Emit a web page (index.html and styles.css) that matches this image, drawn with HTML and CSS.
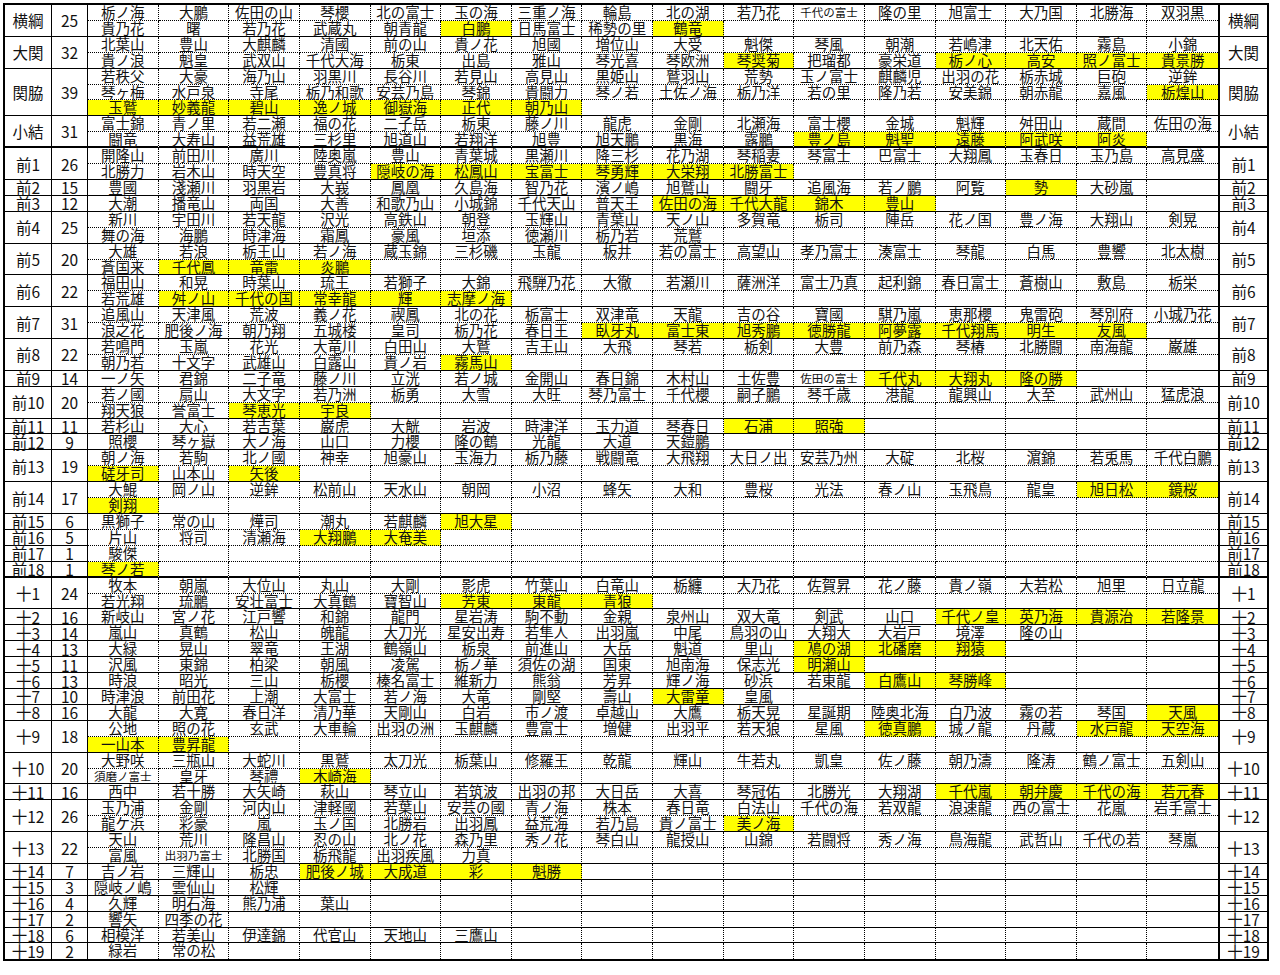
FILE: index.html
```html
<!DOCTYPE html>
<html lang="ja">
<head>
<meta charset="utf-8">
<title>番付表</title>
<link rel="stylesheet" href="styles.css">
</head>
<body>
<div class="page">
<div class="sheet">

<div class="grp"><div class="rk">横綱</div><div class="ct">25</div><div class="names">
<span>栃ノ海</span><span>大鵬</span><span>佐田の山</span><span>琴櫻</span><span>北の富士</span><span>玉の海</span><span>三重ノ海</span><span>輪島</span><span>北の湖</span><span>若乃花</span><span class="s">千代の富士</span><span>隆の里</span><span>旭富士</span><span>大乃国</span><span>北勝海</span><span>双羽黒</span>
<span>貴乃花</span><span>曙</span><span>若乃花</span><span>武蔵丸</span><span>朝青龍</span><span class="y">白鵬</span><span>日馬富士</span><span>稀勢の里</span><span class="y">鶴竜</span><span></span><span></span><span></span><span></span><span></span><span></span><span></span>
</div><div class="rk rr">横綱</div></div>

<div class="grp"><div class="rk">大関</div><div class="ct">32</div><div class="names">
<span>北葉山</span><span>豊山</span><span>大麒麟</span><span>清國</span><span>前の山</span><span>貴ノ花</span><span>旭國</span><span>増位山</span><span>大受</span><span>魁傑</span><span>琴風</span><span>朝潮</span><span>若嶋津</span><span>北天佑</span><span>霧島</span><span>小錦</span>
<span>貴ノ浪</span><span>魁皇</span><span>武双山</span><span>千代大海</span><span>栃東</span><span>出島</span><span>雅山</span><span>琴光喜</span><span>琴欧洲</span><span class="y">琴奨菊</span><span>把瑠都</span><span>豪栄道</span><span class="y">栃ノ心</span><span class="y">高安</span><span class="y">照ノ富士</span><span class="y">貴景勝</span>
</div><div class="rk rr">大関</div></div>

<div class="grp"><div class="rk">関脇</div><div class="ct">39</div><div class="names">
<span>若秩父</span><span>大豪</span><span>海乃山</span><span>羽黒川</span><span>長谷川</span><span>若見山</span><span>高見山</span><span>黒姫山</span><span>鷲羽山</span><span>荒勢</span><span>玉ノ富士</span><span>麒麟児</span><span>出羽の花</span><span>栃赤城</span><span>巨砲</span><span>逆鉾</span>
<span>琴ヶ梅</span><span>水戸泉</span><span>寺尾</span><span>栃乃和歌</span><span>安芸乃島</span><span>琴錦</span><span>貴闘力</span><span>琴ノ若</span><span>土佐ノ海</span><span>栃乃洋</span><span>若の里</span><span>隆乃若</span><span>安美錦</span><span>朝赤龍</span><span>嘉風</span><span class="y">栃煌山</span>
<span class="y">玉鷲</span><span class="y">妙義龍</span><span class="y">碧山</span><span class="y">逸ノ城</span><span class="y">御嶽海</span><span class="y">正代</span><span class="y">朝乃山</span><span></span><span></span><span></span><span></span><span></span><span></span><span></span><span></span><span></span>
</div><div class="rk rr">関脇</div></div>

<div class="grp thick"><div class="rk">小結</div><div class="ct">31</div><div class="names">
<span>富士錦</span><span>青ノ里</span><span>若二瀬</span><span>福の花</span><span>二子岳</span><span>栃東</span><span>藤ノ川</span><span>龍虎</span><span>金剛</span><span>北瀬海</span><span>富士櫻</span><span>金城</span><span>魁輝</span><span>舛田山</span><span>蔵間</span><span>佐田の海</span>
<span>闘竜</span><span>大寿山</span><span>益荒雄</span><span>三杉里</span><span>旭道山</span><span>若翔洋</span><span>旭豊</span><span>旭天鵬</span><span>黒海</span><span>露鵬</span><span class="y">豊ノ島</span><span class="y">魁聖</span><span class="y">遠藤</span><span class="y">阿武咲</span><span class="y">阿炎</span><span></span>
</div><div class="rk rr">小結</div></div>

<div class="grp"><div class="rk">前1</div><div class="ct">26</div><div class="names">
<span>開隆山</span><span>前田川</span><span>廣川</span><span>陸奥嵐</span><span>豊山</span><span>青葉城</span><span>黒瀬川</span><span>降三杉</span><span>花乃湖</span><span>琴稲妻</span><span>琴富士</span><span>巴富士</span><span>大翔鳳</span><span>玉春日</span><span>玉乃島</span><span>高見盛</span>
<span>北勝力</span><span>岩木山</span><span>時天空</span><span>豊真将</span><span class="y">隠岐の海</span><span class="y">松鳳山</span><span class="y">宝富士</span><span class="y">琴勇輝</span><span class="y">大栄翔</span><span class="y">北勝富士</span><span></span><span></span><span></span><span></span><span></span><span></span>
</div><div class="rk rr">前1</div></div>

<div class="grp"><div class="rk">前2</div><div class="ct">15</div><div class="names">
<span>豊國</span><span>淺瀬川</span><span>羽黒岩</span><span>大峩</span><span>鳳凰</span><span>久島海</span><span>智乃花</span><span>濱ノ嶋</span><span>旭鷲山</span><span>闘牙</span><span>追風海</span><span>若ノ鵬</span><span>阿覧</span><span class="y">勢</span><span>大砂嵐</span><span></span>
</div><div class="rk rr">前2</div></div>

<div class="grp"><div class="rk">前3</div><div class="ct">12</div><div class="names">
<span>大潮</span><span>播竜山</span><span>両国</span><span>大善</span><span>和歌乃山</span><span>小城錦</span><span>千代天山</span><span>普天王</span><span class="y">佐田の海</span><span class="y">千代大龍</span><span class="y">錦木</span><span class="y">豊山</span><span></span><span></span><span></span><span></span>
</div><div class="rk rr">前3</div></div>

<div class="grp"><div class="rk">前4</div><div class="ct">25</div><div class="names">
<span>新川</span><span>宇田川</span><span>若天龍</span><span>沢光</span><span>高鉄山</span><span>朝登</span><span>玉輝山</span><span>青葉山</span><span>天ノ山</span><span>多賀竜</span><span>栃司</span><span>陣岳</span><span>花ノ国</span><span>豊ノ海</span><span>大翔山</span><span>剣晃</span>
<span>舞の海</span><span>海鵬</span><span>時津海</span><span>霜鳳</span><span>豪風</span><span>垣添</span><span>徳瀬川</span><span>栃乃若</span><span>荒鷲</span><span></span><span></span><span></span><span></span><span></span><span></span><span></span>
</div><div class="rk rr">前4</div></div>

<div class="grp"><div class="rk">前5</div><div class="ct">20</div><div class="names">
<span>大雄</span><span>若浪</span><span>栃王山</span><span>若ノ海</span><span>蔵玉錦</span><span>三杉磯</span><span>玉龍</span><span>板井</span><span>若の富士</span><span>高望山</span><span>孝乃富士</span><span>湊富士</span><span>琴龍</span><span>白馬</span><span>豊響</span><span>北太樹</span>
<span>蒼国来</span><span class="y">千代鳳</span><span class="y">竜電</span><span class="y">炎鵬</span><span></span><span></span><span></span><span></span><span></span><span></span><span></span><span></span><span></span><span></span><span></span><span></span>
</div><div class="rk rr">前5</div></div>

<div class="grp"><div class="rk">前6</div><div class="ct">22</div><div class="names">
<span>福田山</span><span>和晃</span><span>時葉山</span><span>琉王</span><span>若獅子</span><span>大錦</span><span>飛騨乃花</span><span>大徹</span><span>若瀬川</span><span>薩洲洋</span><span>富士乃真</span><span>起利錦</span><span>春日富士</span><span>蒼樹山</span><span>敷島</span><span>栃栄</span>
<span>若荒雄</span><span class="y">舛ノ山</span><span class="y">千代の国</span><span class="y">常幸龍</span><span class="y">輝</span><span class="y">志摩ノ海</span><span></span><span></span><span></span><span></span><span></span><span></span><span></span><span></span><span></span><span></span>
</div><div class="rk rr">前6</div></div>

<div class="grp"><div class="rk">前7</div><div class="ct">31</div><div class="names">
<span>追風山</span><span>天津風</span><span>荒波</span><span>義ノ花</span><span>禊鳳</span><span>北の花</span><span>栃富士</span><span>双津竜</span><span>天龍</span><span>吉の谷</span><span>寶國</span><span>騏乃嵐</span><span>恵那櫻</span><span>鬼雷砲</span><span>琴別府</span><span>小城乃花</span>
<span>浪之花</span><span>肥後ノ海</span><span>朝乃翔</span><span>五城楼</span><span>皇司</span><span>栃乃花</span><span>春日王</span><span class="y">臥牙丸</span><span class="y">富士東</span><span class="y">旭秀鵬</span><span class="y">徳勝龍</span><span class="y">阿夢露</span><span class="y">千代翔馬</span><span class="y">明生</span><span class="y">友風</span><span></span>
</div><div class="rk rr">前7</div></div>

<div class="grp"><div class="rk">前8</div><div class="ct">22</div><div class="names">
<span>若鳴門</span><span>玉嵐</span><span>花光</span><span>大竜川</span><span>白田山</span><span>大鷲</span><span>吉王山</span><span>大飛</span><span>琴若</span><span>栃剣</span><span>大豊</span><span>前乃森</span><span>琴椿</span><span>北勝闘</span><span>南海龍</span><span>巌雄</span>
<span>朝乃若</span><span>十文字</span><span>武雄山</span><span>白露山</span><span>貴ノ岩</span><span class="y">霧馬山</span><span></span><span></span><span></span><span></span><span></span><span></span><span></span><span></span><span></span><span></span>
</div><div class="rk rr">前8</div></div>

<div class="grp"><div class="rk">前9</div><div class="ct">14</div><div class="names">
<span>一ノ矢</span><span>君錦</span><span>二子竜</span><span>藤ノ川</span><span>立洸</span><span>若ノ城</span><span>金開山</span><span>春日錦</span><span>木村山</span><span>土佐豊</span><span class="s">佐田の富士</span><span class="y">千代丸</span><span class="y">大翔丸</span><span class="y">隆の勝</span><span></span><span></span>
</div><div class="rk rr">前9</div></div>

<div class="grp"><div class="rk">前10</div><div class="ct">20</div><div class="names">
<span>若ノ國</span><span>扇山</span><span>大文字</span><span>若乃洲</span><span>栃勇</span><span>大雪</span><span>大旺</span><span>琴乃富士</span><span>千代櫻</span><span>嗣子鵬</span><span>琴千歳</span><span>港龍</span><span>龍興山</span><span>大至</span><span>武州山</span><span>猛虎浪</span>
<span>翔天狼</span><span>誉富士</span><span class="y">琴恵光</span><span class="y">宇良</span><span></span><span></span><span></span><span></span><span></span><span></span><span></span><span></span><span></span><span></span><span></span><span></span>
</div><div class="rk rr">前10</div></div>

<div class="grp"><div class="rk">前11</div><div class="ct">11</div><div class="names">
<span>若杉山</span><span>大心</span><span>若吉葉</span><span>巌虎</span><span>大觥</span><span>岩波</span><span>時津洋</span><span>玉力道</span><span>琴春日</span><span class="y">石浦</span><span class="y">照強</span><span></span><span></span><span></span><span></span><span></span>
</div><div class="rk rr">前11</div></div>

<div class="grp"><div class="rk">前12</div><div class="ct">9</div><div class="names">
<span>照櫻</span><span>琴ヶ嶽</span><span>大ノ海</span><span>山口</span><span>力櫻</span><span>隆の鶴</span><span>光龍</span><span>大道</span><span>天鎧鵬</span><span></span><span></span><span></span><span></span><span></span><span></span><span></span>
</div><div class="rk rr">前12</div></div>

<div class="grp"><div class="rk">前13</div><div class="ct">19</div><div class="names">
<span>朝ノ海</span><span>若駒</span><span>北ノ國</span><span>神幸</span><span>旭豪山</span><span>玉海力</span><span>栃乃藤</span><span>戦闘竜</span><span>大飛翔</span><span>大日ノ出</span><span>安芸乃州</span><span>大碇</span><span>北桜</span><span>濵錦</span><span>若兎馬</span><span>千代白鵬</span>
<span class="y">磋牙司</span><span>山本山</span><span class="y">矢後</span><span></span><span></span><span></span><span></span><span></span><span></span><span></span><span></span><span></span><span></span><span></span><span></span><span></span>
</div><div class="rk rr">前13</div></div>

<div class="grp"><div class="rk">前14</div><div class="ct">17</div><div class="names">
<span>大鯤</span><span>岡ノ山</span><span>逆鉾</span><span>松前山</span><span>天水山</span><span>朝岡</span><span>小沼</span><span>蜂矢</span><span>大和</span><span>豊桜</span><span>光法</span><span>春ノ山</span><span>玉飛鳥</span><span>龍皇</span><span class="y">旭日松</span><span class="y">鏡桜</span>
<span class="y">剣翔</span><span></span><span></span><span></span><span></span><span></span><span></span><span></span><span></span><span></span><span></span><span></span><span></span><span></span><span></span><span></span>
</div><div class="rk rr">前14</div></div>

<div class="grp dt"><div class="rk">前15</div><div class="ct">6</div><div class="names">
<span>黒獅子</span><span>常の山</span><span>燁司</span><span>潮丸</span><span>若麒麟</span><span class="y">旭大星</span><span></span><span></span><span></span><span></span><span></span><span></span><span></span><span></span><span></span><span></span>
</div><div class="rk rr">前15</div></div>

<div class="grp dt"><div class="rk">前16</div><div class="ct">5</div><div class="names">
<span>片山</span><span>将司</span><span>清瀬海</span><span class="y">大翔鵬</span><span class="y">大奄美</span><span></span><span></span><span></span><span></span><span></span><span></span><span></span><span></span><span></span><span></span><span></span>
</div><div class="rk rr">前16</div></div>

<div class="grp dt"><div class="rk">前17</div><div class="ct">1</div><div class="names">
<span>駿傑</span><span></span><span></span><span></span><span></span><span></span><span></span><span></span><span></span><span></span><span></span><span></span><span></span><span></span><span></span><span></span>
</div><div class="rk rr">前17</div></div>

<div class="grp thick"><div class="rk">前18</div><div class="ct">1</div><div class="names">
<span class="y">琴ノ若</span><span></span><span></span><span></span><span></span><span></span><span></span><span></span><span></span><span></span><span></span><span></span><span></span><span></span><span></span><span></span>
</div><div class="rk rr">前18</div></div>

<div class="grp"><div class="rk">十1</div><div class="ct">24</div><div class="names">
<span>牧本</span><span>朝嵐</span><span>大位山</span><span>丸山</span><span>大剛</span><span>影虎</span><span>竹葉山</span><span>白竜山</span><span>栃纏</span><span>大乃花</span><span>佐賀昇</span><span>花ノ藤</span><span>貴ノ嶺</span><span>大若松</span><span>旭里</span><span>日立龍</span>
<span>若光翔</span><span>琉鵬</span><span>安壮富士</span><span>大真鶴</span><span>寶智山</span><span class="y">芳東</span><span class="y">東龍</span><span class="y">青狼</span><span></span><span></span><span></span><span></span><span></span><span></span><span></span><span></span>
</div><div class="rk rr">十1</div></div>

<div class="grp"><div class="rk">十2</div><div class="ct">16</div><div class="names">
<span>新岐山</span><span>宮ノ花</span><span>江戸響</span><span>和錦</span><span>龍門</span><span>星岩涛</span><span>駒不動</span><span>金親</span><span>泉州山</span><span>双大竜</span><span>剣武</span><span>山口</span><span class="y">千代ノ皇</span><span class="y">英乃海</span><span class="y">貴源治</span><span class="y">若隆景</span>
</div><div class="rk rr">十2</div></div>

<div class="grp"><div class="rk">十3</div><div class="ct">14</div><div class="names">
<span>嵐山</span><span>真鶴</span><span>松山</span><span>魄龍</span><span>大刀光</span><span>星安出寿</span><span>若隼人</span><span>出羽嵐</span><span>中尾</span><span>鳥羽の山</span><span>大翔大</span><span>大岩戸</span><span>境澤</span><span>隆の山</span><span></span><span></span>
</div><div class="rk rr">十3</div></div>

<div class="grp"><div class="rk">十4</div><div class="ct">13</div><div class="names">
<span>大緑</span><span>晃山</span><span>翠竜</span><span>王湖</span><span>鶴嶺山</span><span>栃泉</span><span>前進山</span><span>大岳</span><span>魁道</span><span>里山</span><span class="y">鳰の湖</span><span class="y">北磻磨</span><span class="y">翔猿</span><span></span><span></span><span></span>
</div><div class="rk rr">十4</div></div>

<div class="grp"><div class="rk">十5</div><div class="ct">11</div><div class="names">
<span>沢風</span><span>東錦</span><span>柏梁</span><span>朝風</span><span>凌駕</span><span>栃ノ華</span><span>須佐の湖</span><span>国東</span><span>旭南海</span><span>保志光</span><span class="y">明瀬山</span><span></span><span></span><span></span><span></span><span></span>
</div><div class="rk rr">十5</div></div>

<div class="grp"><div class="rk">十6</div><div class="ct">13</div><div class="names">
<span>時浪</span><span>昭光</span><span>三山</span><span>栃櫻</span><span>榛名富士</span><span>維新力</span><span>熊翁</span><span>芳昇</span><span>輝ノ海</span><span>砂浜</span><span>若東龍</span><span class="y">白鷹山</span><span class="y">琴勝峰</span><span></span><span></span><span></span>
</div><div class="rk rr">十6</div></div>

<div class="grp"><div class="rk">十7</div><div class="ct">10</div><div class="names">
<span>時津浪</span><span>前田花</span><span>上潮</span><span>大富士</span><span>若ノ海</span><span>大竜</span><span>剛堅</span><span>壽山</span><span class="y">大雷童</span><span>皇風</span><span></span><span></span><span></span><span></span><span></span><span></span>
</div><div class="rk rr">十7</div></div>

<div class="grp"><div class="rk">十8</div><div class="ct">16</div><div class="names">
<span>大龍</span><span>大寛</span><span>春日洋</span><span>清乃華</span><span>天剛山</span><span>白岩</span><span>市ノ渡</span><span>卓越山</span><span>大鷹</span><span>栃天晃</span><span>星誕期</span><span>陸奥北海</span><span>白乃波</span><span>霧の若</span><span>琴国</span><span class="y">天風</span>
</div><div class="rk rr">十8</div></div>

<div class="grp"><div class="rk">十9</div><div class="ct">18</div><div class="names">
<span>公地</span><span>照の花</span><span>玄武</span><span>大車輪</span><span>出羽の洲</span><span>玉麒麟</span><span>豊富士</span><span>増健</span><span>出羽平</span><span>若天狼</span><span>星風</span><span class="y">徳真鵬</span><span>城ノ龍</span><span>丹蔵</span><span class="y">水戸龍</span><span class="y">天空海</span>
<span class="y">一山本</span><span class="y">豊昇龍</span><span></span><span></span><span></span><span></span><span></span><span></span><span></span><span></span><span></span><span></span><span></span><span></span><span></span><span></span>
</div><div class="rk rr">十9</div></div>

<div class="grp"><div class="rk">十10</div><div class="ct">20</div><div class="names">
<span>大野咲</span><span>三瓶山</span><span>大蛇川</span><span>黒鷲</span><span>太刀光</span><span>栃葉山</span><span>修羅王</span><span>乾龍</span><span>輝山</span><span>牛若丸</span><span>凱皇</span><span>佐ノ藤</span><span>朝乃濤</span><span>隆涛</span><span>鶴ノ富士</span><span>五剣山</span>
<span class="s">須磨ノ富士</span><span>皇牙</span><span>琴禮</span><span class="y">木崎海</span><span></span><span></span><span></span><span></span><span></span><span></span><span></span><span></span><span></span><span></span><span></span><span></span>
</div><div class="rk rr">十10</div></div>

<div class="grp"><div class="rk">十11</div><div class="ct">16</div><div class="names">
<span>西中</span><span>若十勝</span><span>大矢崎</span><span>萩山</span><span>琴立山</span><span>若筑波</span><span>出羽の邦</span><span>大日岳</span><span>大喜</span><span>琴冠佑</span><span>北勝光</span><span>大翔湖</span><span class="y">千代嵐</span><span class="y">朝弁慶</span><span class="y">千代の海</span><span class="y">若元春</span>
</div><div class="rk rr">十11</div></div>

<div class="grp"><div class="rk">十12</div><div class="ct">26</div><div class="names">
<span>玉乃浦</span><span>金剛</span><span>河内山</span><span>津軽國</span><span>若葉山</span><span>安芸の國</span><span>青ノ海</span><span>株本</span><span>春日竜</span><span>白法山</span><span>千代の海</span><span>若双龍</span><span>浪速龍</span><span>西の富士</span><span>花嵐</span><span>岩手富士</span>
<span>龍ケ浜</span><span>彩豪</span><span>嵐</span><span>玉ノ国</span><span>北勝岩</span><span>出羽鳳</span><span>益荒海</span><span>若乃島</span><span>貴ノ富士</span><span class="y">美ノ海</span><span></span><span></span><span></span><span></span><span></span><span></span>
</div><div class="rk rr">十12</div></div>

<div class="grp"><div class="rk">十13</div><div class="ct">22</div><div class="names">
<span>天山</span><span>荒川</span><span>隆昌山</span><span>忍の山</span><span>北ノ花</span><span>森乃里</span><span>秀ノ花</span><span>琴白山</span><span>龍授山</span><span>山錦</span><span>若闘将</span><span>秀ノ海</span><span>鳥海龍</span><span>武哲山</span><span>千代の若</span><span>琴嵐</span>
<span>富風</span><span class="s">出羽乃富士</span><span>北勝国</span><span>栃飛龍</span><span>出羽疾風</span><span>力真</span><span></span><span></span><span></span><span></span><span></span><span></span><span></span><span></span><span></span><span></span>
</div><div class="rk rr">十13</div></div>

<div class="grp"><div class="rk">十14</div><div class="ct">7</div><div class="names">
<span>吉ノ岩</span><span>三輝山</span><span>栃忠</span><span class="y">肥後ノ城</span><span class="y">大成道</span><span class="y">彩</span><span class="y">魁勝</span><span></span><span></span><span></span><span></span><span></span><span></span><span></span><span></span><span></span>
</div><div class="rk rr">十14</div></div>

<div class="grp"><div class="rk">十15</div><div class="ct">3</div><div class="names">
<span>隠岐ノ嶋</span><span>雲仙山</span><span>松輝</span><span></span><span></span><span></span><span></span><span></span><span></span><span></span><span></span><span></span><span></span><span></span><span></span><span></span>
</div><div class="rk rr">十15</div></div>

<div class="grp"><div class="rk">十16</div><div class="ct">4</div><div class="names">
<span>久輝</span><span>明石海</span><span>熊乃浦</span><span>葉山</span><span></span><span></span><span></span><span></span><span></span><span></span><span></span><span></span><span></span><span></span><span></span><span></span>
</div><div class="rk rr">十16</div></div>

<div class="grp"><div class="rk">十17</div><div class="ct">2</div><div class="names">
<span>響矢</span><span>四季の花</span><span></span><span></span><span></span><span></span><span></span><span></span><span></span><span></span><span></span><span></span><span></span><span></span><span></span><span></span>
</div><div class="rk rr">十17</div></div>

<div class="grp"><div class="rk">十18</div><div class="ct">6</div><div class="names">
<span>相模洋</span><span>若美山</span><span>伊達錦</span><span>代官山</span><span>天地山</span><span>三鷹山</span><span></span><span></span><span></span><span></span><span></span><span></span><span></span><span></span><span></span><span></span>
</div><div class="rk rr">十18</div></div>

<div class="grp"><div class="rk">十19</div><div class="ct">2</div><div class="names">
<span>緑岩</span><span>常の松</span><span></span><span></span><span></span><span></span><span></span><span></span><span></span><span></span><span></span><span></span><span></span><span></span><span></span><span></span>
</div><div class="rk rr">十19</div></div>

</div>
</div>
</body>
</html>
```

FILE: styles.css
```css
html, body {
  margin: 0;
  padding: 0;
  background: #fff;
}

body {
  font-family: "Noto Sans CJK JP", "Noto Sans CJK SC", sans-serif;
  color: #111;
}

.page {
  padding: 3px 0 0 3px;
}

.sheet {
  width: 1262px;
  border: 2px solid #000;
}

.grp {
  display: flex;
}

.rk,
.ct {
  box-sizing: border-box;
  flex: none;
  display: flex;
  align-items: center;
  justify-content: center;
  font-size: 15.5px;
  line-height: 12px;
  border-right: 1px solid #000;
  border-bottom: 1px solid #000;
  white-space: nowrap;
}

.rk {
  width: 47px;
}

.ct {
  width: 36px;
}

.rk.rr {
  width: 49px;
  border-right: none;
  border-left: 2px solid #000;
}

.names {
  flex: none;
  width: 1130px;
  display: grid;
  grid-template-columns: repeat(16, 1fr);
  grid-auto-rows: 15.92px;
}

.names span {
  box-sizing: border-box;
  border-right: 1px dotted #000;
  border-bottom: 1px dotted #000;
  font-size: 14.5px;
  line-height: 14px;
  text-align: center;
  white-space: nowrap;
}

.names span:nth-child(16n) {
  border-right: none;
}

.names span:nth-last-child(-n+16) {
  border-bottom: 1px solid #000;
}

.names span.y {
  background: #ffff00;
}

.names span.s {
  font-size: 11.5px;
  line-height: 14px;
}

.grp.dt .names span:nth-last-child(-n+16) {
  border-bottom: 1px dotted #000;
}

.grp.thick .rk,
.grp.thick .ct,
.grp.thick .names span:nth-last-child(-n+16) {
  border-bottom-width: 2px;
}

.grp:last-child .rk,
.grp:last-child .ct,
.grp:last-child .names span:nth-last-child(-n+16) {
  border-bottom: none;
}
```
